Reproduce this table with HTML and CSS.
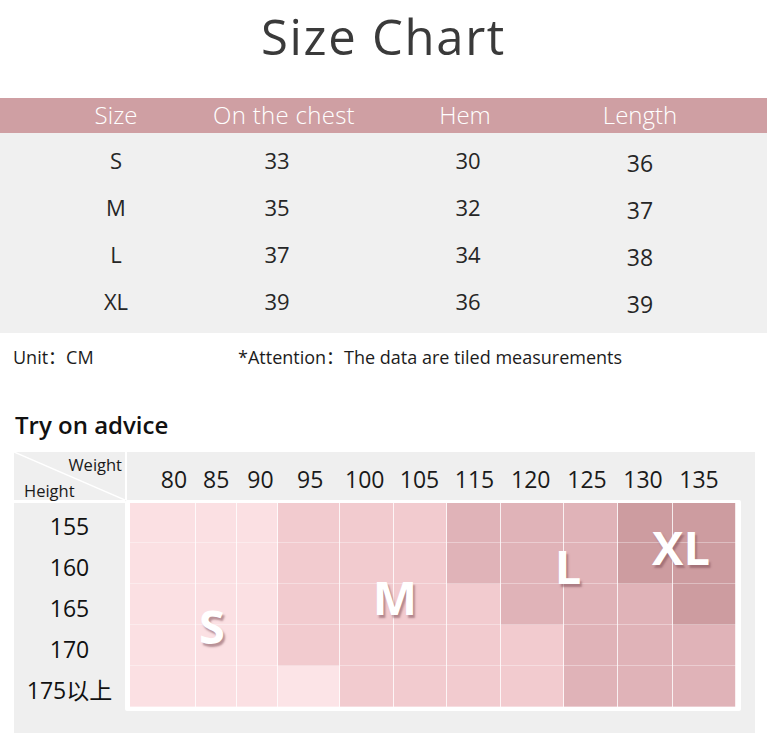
FILE: index.html
```html
<!DOCTYPE html>
<html lang="en">
<head>
<meta charset="utf-8">
<title>Size Chart</title>
<link rel="stylesheet" href="styles.css">
</head>
<body>
<h1 class="title">Size Chart</h1>

<div class="size-table">
  <div class="st-row st-head">
    <span>Size</span><span>On the chest</span><span>Hem</span><span>Length</span>
  </div>
  <div class="st-body">
    <div class="st-row"><span>S</span><span class="c2">33</span><span class="c3">30</span><span class="c4">36</span></div>
    <div class="st-row"><span>M</span><span class="c2">35</span><span class="c3">32</span><span class="c4">37</span></div>
    <div class="st-row"><span>L</span><span class="c2">37</span><span class="c3">34</span><span class="c4">38</span></div>
    <div class="st-row"><span>XL</span><span class="c2">39</span><span class="c3">36</span><span class="c4">39</span></div>
  </div>
</div>

<div class="notes">
  <span class="unit">Unit：CM</span>
  <span class="attn">*Attention：The data are tiled measurements</span>
</div>

<h2 class="advice-title">Try on advice</h2>

<div class="advice">
  <div class="adv-top">
    <div class="corner">
      <svg class="diag" width="111" height="48" viewBox="0 0 111 48"><line x1="0" y1="0" x2="111" y2="48" stroke="#ffffff" stroke-width="1.5"/></svg>
      <span class="w-lbl">Weight</span>
      <span class="h-lbl">Height</span>
    </div>
    <div class="weights">
      <span>80</span><span>85</span><span>90</span><span>95</span><span>100</span><span>105</span><span>115</span><span>120</span><span>125</span><span>130</span><span>135</span>
    </div>
  </div>
  <div class="adv-body">
    <div class="heights">
      <div class="hrow first">155</div>
      <div class="hrow">160</div>
      <div class="hrow">165</div>
      <div class="hrow">170</div>
      <div class="hrow">175以上</div>
    </div>
    <div class="frame">
      <div class="grid">
        <div class="c l1"></div><div class="c l1"></div><div class="c l1"></div><div class="c l2"></div><div class="c l2"></div><div class="c l2"></div><div class="c l3"></div><div class="c l3"></div><div class="c l3"></div><div class="c l4"></div><div class="c l4"></div>
        <div class="c l1"></div><div class="c l1"></div><div class="c l1"></div><div class="c l2"></div><div class="c l2"></div><div class="c l2"></div><div class="c l3"></div><div class="c l3"></div><div class="c l3"></div><div class="c l4"></div><div class="c l4"></div>
        <div class="c l1"></div><div class="c l1"></div><div class="c l1"></div><div class="c l2"></div><div class="c l2"></div><div class="c l2"></div><div class="c l2"></div><div class="c l3"></div><div class="c l3"></div><div class="c l3"></div><div class="c l4"></div>
        <div class="c l1"></div><div class="c l1"></div><div class="c l1"></div><div class="c l2"></div><div class="c l2"></div><div class="c l2"></div><div class="c l2"></div><div class="c l2"></div><div class="c l3"></div><div class="c l3"></div><div class="c l3"></div>
        <div class="c l1"></div><div class="c l1"></div><div class="c l1"></div><div class="c l0"></div><div class="c l2"></div><div class="c l2"></div><div class="c l2"></div><div class="c l2"></div><div class="c l3"></div><div class="c l3"></div><div class="c l3"></div>
        <span class="tag tag-s">S</span>
        <span class="tag tag-m">M</span>
        <span class="tag tag-l">L</span>
        <span class="tag tag-xl">XL</span>
      </div>
    </div>
  </div>
</div>
</body>
</html>
```

FILE: styles.css
```css
* { box-sizing: border-box; }

body {
  margin: 0;
  background: #ffffff;
  font-family: "Open Sans", "Noto Sans", "Noto Sans CJK SC", sans-serif;
  color: #1a1a1a;
  width: 767px;
  overflow: hidden;
}

.title {
  margin: 0;
  height: 98px;
  padding-top: 12px;
  font-size: 49px;
  line-height: 49px;
  font-weight: 400;
  letter-spacing: 1.7px;
  text-align: center;
  color: #3a3a3a;
}

.st-row {
  display: grid;
  grid-template-columns: 160px 170px 198px 152px;
  padding-left: 36px;
  text-align: center;
}

.st-head {
  background: #cf9fa3;
  height: 35px;
  padding-top: 0;
  line-height: 34px;
  font-size: 24px;
  font-weight: 300;
  color: #ffffff;
}

.st-head span:nth-child(2) { letter-spacing: 0.3px; padding-left: 6px; }

.st-body {
  background: #f0f0f0;
  height: 200px;
  padding-top: 4px;
}

.st-body .st-row {
  height: 47px;
  line-height: 47px;
  font-size: 22px;
  font-weight: 400;
  color: #262626;
}

.st-body .c2 { padding-right: 8px; }
.st-body .c3 { padding-left: 6px; }
.st-body .c4 { font-size: 23px; padding-top: 3px; }

.notes {
  display: flex;
  height: 48px;
  line-height: 48px;
  padding-left: 13px;
  font-size: 18px;
  color: #1c1c1c;
}

.unit { width: 225px; }
.attn { letter-spacing: 0; }

.advice-title {
  margin: 29px 0 12px 15px;
  font-size: 24px;
  line-height: 30px;
  font-weight: 600;
  color: #111111;
}

.advice {
  margin-left: 14px;
  width: 741px;
  background: #efefef;
  padding-bottom: 22px;
}

.adv-top {
  display: flex;
  height: 48px;
}

.corner {
  width: 111px;
  position: relative;
  display: flex;
  flex-direction: column;
  font-size: 16.5px;
  line-height: 24px;
  color: #1a1a1a;
}

.diag {
  position: absolute;
  left: 0;
  top: 0;
}

.w-lbl {
  text-align: right;
  padding-right: 3px;
  padding-top: 1px;
}

.h-lbl {
  padding-left: 10px;
  margin-top: 2px;
}

.weights {
  flex: 1;
  border-left: 2px solid #ffffff;
  display: grid;
  grid-template-columns: 42px 42.5px 46px 53.5px 55.5px 54px 56px 56.5px 56px 56px 56px;
  padding-left: 26px;
  padding-top: 7px;
  line-height: 41px;
  font-size: 23px;
  color: #1a1a1a;
  text-align: center;
}

.adv-body {
  display: flex;
}

.heights {
  width: 111px;
  border-top: 3px solid #ffffff;
  font-size: 23px;
  color: #111111;
  text-align: center;
}

.hrow {
  height: 41px;
  padding-top: 8px;
  line-height: 33px;
}

.hrow.first {
  height: 40px;
  padding-top: 7px;
}

.frame {
  background: #ffffff;
  padding: 3px 5px 4px 5px;
  border-radius: 2px;
}

.grid {
  position: relative;
  display: grid;
  grid-template-columns: 66px 41px 41px 62px 54px 53px 54px 63px 54px 55px 63px;
  grid-template-rows: 40px 41px 41px 41px 41px;
}

.c {
  box-shadow: inset -1px 0 0 rgba(255, 255, 255, 0.8), inset 0 -1px 0 rgba(255, 255, 255, 0.35);
}

.l0 { background: #fce4e7; }
.l1 { background: #fbe0e3; }
.l2 { background: #f2cbcf; }
.l3 { background: #e0b3b8; }
.l4 { background: #cd9ca0; }

.tag {
  position: absolute;
  transform: translateX(-50%);
  font-family: "Open Sans", "Noto Sans", sans-serif;
  font-weight: 700;
  font-size: 47px;
  line-height: 47px;
  color: #ffffff;
  text-shadow: 2px 3px 2px rgba(130, 80, 90, 0.55);
}

.tag-s { left: 82px; top: 100px; }
.tag-m { left: 265px; top: 71px; }
.tag-l { left: 438px; top: 40px; }
.tag-xl { left: 551px; top: 21px; }
```
